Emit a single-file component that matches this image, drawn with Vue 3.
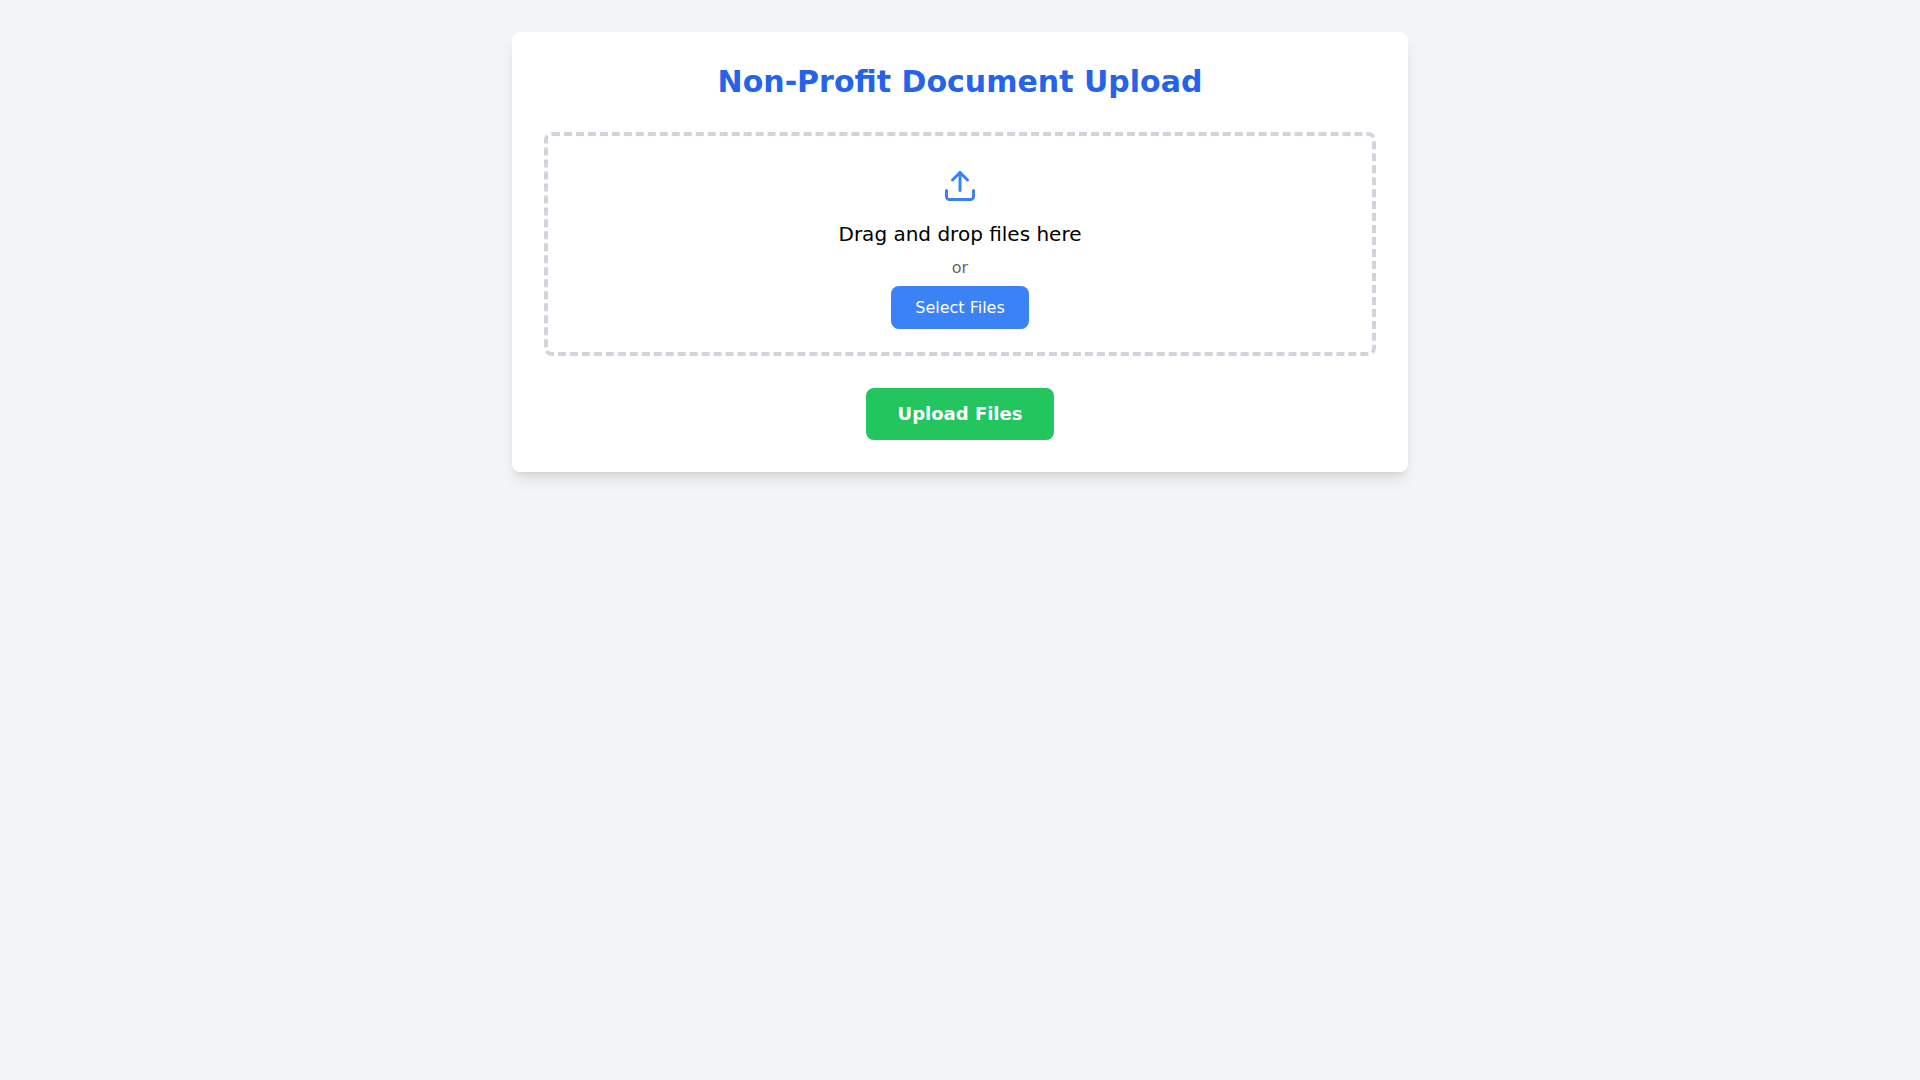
<script setup>
import { ref } from 'vue'

const files = ref([])
const picker = ref(null)

function addFiles(list) {
  files.value = [...files.value, ...Array.from(list)]
}
</script>

<template>
  <main class="page">
    <section class="card">
      <h1 class="title">Non-Profit Document Upload</h1>
      <div class="dropzone" @dragover.prevent @drop.prevent="addFiles($event.dataTransfer.files)">
        <svg class="icon" viewBox="0 0 24 24" fill="none" stroke="currentColor" stroke-width="2" stroke-linecap="round" stroke-linejoin="round" aria-hidden="true">
          <path d="M21 15v4a2 2 0 0 1-2 2H5a2 2 0 0 1-2-2v-4" />
          <polyline points="17 8 12 3 7 8" />
          <line x1="12" y1="3" x2="12" y2="15" />
        </svg>
        <p class="lead">Drag and drop files here</p>
        <p class="or">or</p>
        <input ref="picker" class="picker" type="file" multiple aria-label="Select Files" @change="addFiles($event.target.files)" />
        <button class="select" type="button" @click="picker.click()">Select Files</button>
      </div>
      <div class="actions">
        <button class="upload" type="button">Upload Files</button>
      </div>
    </section>
  </main>
</template>

<style>
body {
  margin: 0;
  background: #f3f4f6;
}
</style>

<style scoped>
.page {
  padding: 32px 16px;
  font-family: "DejaVu Sans", sans-serif;
  font-size: 16px;
  line-height: 24px;
  color: #000;
}
.card {
  box-sizing: border-box;
  max-width: 896px;
  margin: 0 auto;
  padding: 32px;
  border-radius: 8px;
  background: #fff;
  box-shadow: 0 10px 15px -3px rgba(0, 0, 0, 0.1), 0 4px 6px -4px rgba(0, 0, 0, 0.1);
}
.title {
  margin: 0 0 32px;
  font-size: 30px;
  line-height: 36px;
  font-weight: 700;
  text-align: center;
  color: #2563eb;
}
.dropzone {
  display: flex;
  flex-direction: column;
  align-items: center;
  padding: 32px 32px 23px;
  border: 4px dashed #d1d5db;
  border-radius: 8px;
}
.icon {
  width: 36px;
  height: 36px;
  margin-bottom: 16px;
  color: #3b82f6;
}
.lead {
  margin: 0 0 8px;
  font-size: 20px;
  line-height: 28px;
}
.or {
  margin: 0 0 6px;
  color: #666;
}
.picker {
  display: none;
}
.select,
.upload {
  border: 0;
  border-radius: 8px;
  font-family: inherit;
  color: #fff;
  cursor: pointer;
}
.select {
  padding: 12px 24px;
  font-size: 16px;
  line-height: 19px;
  background: #3b82f6;
}
.actions {
  display: flex;
  justify-content: center;
  margin-top: 32px;
}
.upload {
  padding: 12px 32px;
  font-size: 18px;
  line-height: 28px;
  font-weight: 700;
  background: #22c55e;
}
</style>
